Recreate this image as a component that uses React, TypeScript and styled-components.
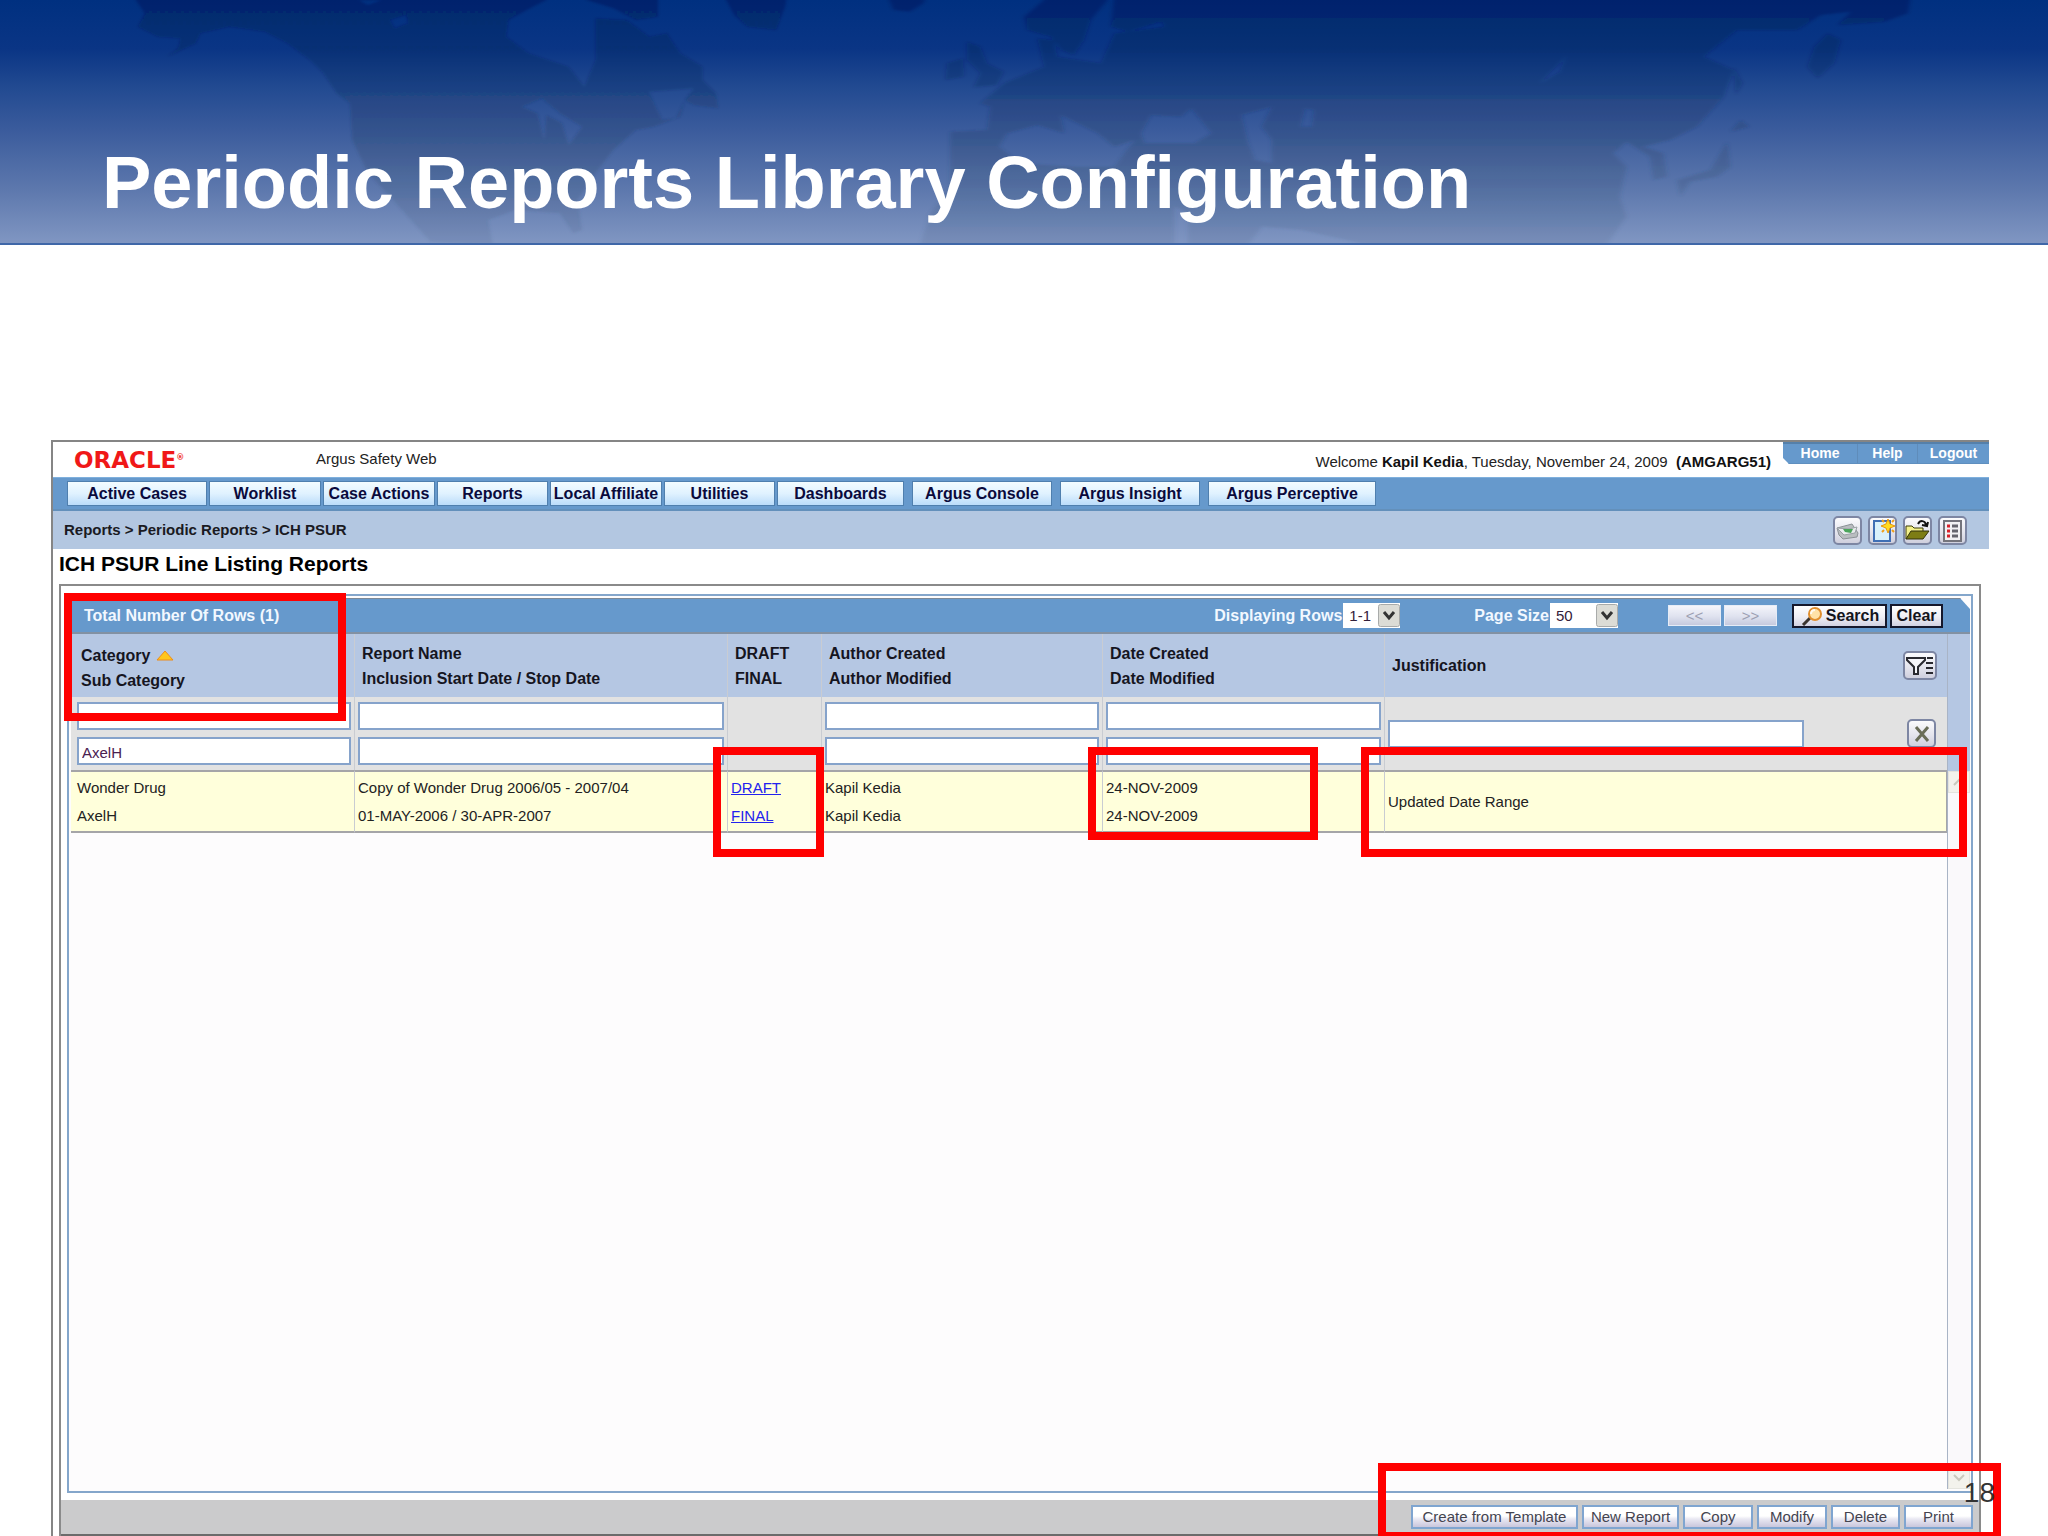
import React from "react";
import styled, { createGlobalStyle, css } from "styled-components";

const GlobalStyle = createGlobalStyle`
  *, *::before, *::after { box-sizing: border-box; }
  body {
    margin: 0;
    background: #ffffff;
    color: #222222;
    font-family: "Liberation Sans", Arial, sans-serif;
    font-size: 15px;
    line-height: 20px;
  }
  button, input, select { font: inherit; color: inherit; }
`;

const Slide = styled.div`
  position: relative;
  display: flex;
  flex-direction: column;
  min-height: 100vh;
  overflow: hidden;
`;

const SlideHeader = styled.header`
  display: grid;
  background: linear-gradient(#003080 0%, #0a3585 20%, #224a91 36%, #3a5b9c 53%, #5d78ad 78%, #8096c2 100%);
  border-bottom: 2px solid #3f67a8;
  height: 245px;
  & > * { grid-area: 1 / 1; }
`;

const SlideTitle = styled.h1`
  margin: 0;
  padding: 141px 40px 0 102px;
  font-size: 74px;
  line-height: 84px;
  color: #ffffff;
`;

const MapArt = styled.svg`
  display: block;
  width: 100%;
  height: 243px;
`;

const AppWindow = styled.main`
  flex: 1;
  display: flex;
  flex-direction: column;
  margin: 195px 59px 0 51px;
  border: solid #858585;
  border-width: 2px 0 0 2px;
`;

const TopBar = styled.div`
  display: flex;
  height: 35px;
  padding-left: 21px;
`;

const Logo = styled.div`
  width: 242px;
  color: #f01818;
  font: bold 23px/36px "DejaVu Sans", sans-serif;
  sup { font-size: 8px; line-height: 8px; vertical-align: 8px; }
`;

const Product = styled.div`
  flex: 1;
  line-height: 34px;
`;

const Welcome = styled.div`
  margin-right: 12px;
  line-height: 40px;
  white-space: pre;
  b { color: #111111; }
`;

const SessionLinks = styled.nav`
  display: flex;
  height: 22px;
  background: #6699cc;
  border-top: 2px solid #5580aa;
  border-bottom: 1px solid #5f8fbf;
  clip-path: polygon(0 0, 100% 0, 100% 100%, 6px 100%, 0 16px);
`;

const SessionLink = styled.a<{ $width: number }>`
  width: ${(p) => p.$width}px;
  color: #ffffff;
  font-size: 14px;
  font-weight: bold;
  line-height: 19px;
  text-align: center;
  text-decoration: none;
  & + & { border-left: 1px solid #5f8cba; }
`;

const MenuBar = styled.nav`
  display: flex;
  gap: 2px;
  height: 34px;
  padding: 3px 0 3px 14px;
  background: #6699cc;
  border-top: 1px solid #7fb0dd;
  border-bottom: 2px solid #6390bb;
`;

const MenuButton = styled.button<{ $width: number; $apart?: boolean }>`
  width: ${(p) => p.$width}px;
  padding: 0;
  border: 1px solid #4f7fae;
  background: linear-gradient(#f3fcff, #e0f2ff 50%, #bbdcfa);
  color: #0a0a3c;
  font-size: 16px;
  font-weight: bold;
  line-height: 20px;
  white-space: nowrap;
  ${(p) => p.$apart && css`margin-left: 6px;`}
`;

const CrumbBar = styled.div`
  display: flex;
  align-items: center;
  justify-content: space-between;
  height: 38px;
  padding: 0 22px 0 11px;
  background: #b3c7e1;
  color: #1a1a22;
  font-weight: bold;
`;

const ToolRow = styled.div`
  display: flex;
  gap: 6px;
`;

const IconButton = styled.button<{ $width?: number }>`
  display: grid;
  place-items: center;
  width: ${(p) => p.$width ?? 29}px;
  height: 29px;
  padding: 0;
  border: 2px solid #7d86a3;
  border-radius: 5px;
  background: linear-gradient(#fbfbfd, #e3e3ec 60%, #cfcfdd);
  svg { display: block; }
`;

const PageTitle = styled.h2`
  margin: 0;
  padding: 1px 6px 6px;
  font-size: 21px;
  line-height: 28px;
  color: #000000;
`;

const Panel = styled.section`
  flex: 1;
  display: flex;
  flex-direction: column;
  margin: 0 8px 0 6px;
  border: solid #8a8a8a;
  border-width: 2px 2px 0;
`;

const GridBox = styled.div`
  flex: 1;
  display: flex;
  flex-direction: column;
  margin: 8px 6px 7px;
  padding: 2px 1px 2px 2px;
  border: 2px solid #84a6cb;
  background: #fdfcfd;
`;

const GridBar = styled.div`
  display: flex;
  align-items: center;
  height: 36px;
  padding: 0 27px 0 13px;
  background: #6699cc;
  border-top: 1px solid #7c8896;
  border-bottom: 2px solid #8291a3;
  color: #f2f8ff;
  font-size: 16px;
  font-weight: bold;
  clip-path: polygon(0 0, calc(100% - 10px) 0, 100% 11px, 100% 100%, 0 100%);
`;

const RowCount = styled.div`
  flex: 1;
`;

const SelectField = styled.label<{ $gap: number }>`
  display: flex;
  align-items: center;
  gap: 1px;
  margin-right: ${(p) => p.$gap}px;
`;

const SelectBox = styled.span<{ $width: number }>`
  position: relative;
  display: block;
  width: ${(p) => p.$width}px;
  height: 25px;
  select {
    appearance: none;
    width: 100%;
    height: 100%;
    padding: 0 24px 0 6px;
    border: 0;
    border-radius: 0;
    background: #ffffff;
    color: #33203a;
    font-weight: normal;
    font-size: 15px;
  }
  svg {
    position: absolute;
    top: 1px;
    right: 0;
    pointer-events: none;
  }
`;

const PageButton = styled.button`
  width: 53px;
  height: 21px;
  margin-right: 3px;
  padding: 0;
  border: 1px solid #e6ecf6;
  background: linear-gradient(#f4f5fb, #dfe2ef 55%, #c6cade);
  color: #9c9fb2;
  font-size: 15px;
  font-weight: normal;
  line-height: 18px;
`;

const ActionButton = styled.button<{ $width: number; $before?: number }>`
  display: flex;
  align-items: center;
  justify-content: center;
  width: ${(p) => p.$width}px;
  height: 24px;
  margin-left: ${(p) => p.$before ?? 3}px;
  padding: 0;
  border: 2px solid #15182c;
  background: linear-gradient(#ffffff, #eeeef5 55%, #d2d2e2);
  color: #14141c;
  font-size: 16px;
  font-weight: bold;
  line-height: 20px;
`;

const GridBody = styled.div`
  flex: 1;
  display: flex;
  align-items: stretch;
`;

const TableArea = styled.div`
  flex: 1;
`;

const Table = styled.table`
  width: 100%;
  table-layout: fixed;
  border-collapse: separate;
  border-spacing: 0;
  text-align: left;
`;

const cellEdge = css`
  border-left: 1px solid #c9ccd2;
  &:first-child { padding-left: 6px; border-left: 0; }
`;

const HeadCell = styled.th`
  height: 63px;
  padding: 0 2px 0 7px;
  background: #b5c7e3;
  color: #15151f;
  font-size: 16px;
  font-weight: bold;
  line-height: 25px;
  ${cellEdge}
  &:first-child { padding: 5px 0 0 10px; }
`;

const FilterCell = styled.td`
  height: 73px;
  padding: 0 3px;
  background: #e2e2e2;
  ${cellEdge}
`;

const DataCell = styled.td`
  height: 63px;
  padding: 0 3px;
  border-top: 2px solid #a5a5a8;
  border-bottom: 2px solid #a5a5a8;
  background: #ffffdb;
  line-height: 28px;
  ${cellEdge}
  &:last-child { border-right: 1px solid #a5a5a8; }
  a { color: #2222ee; }
`;

const Line = styled.div`
  display: flex;
  align-items: center;
  gap: 6px;
`;

const Spread = styled.div`
  display: flex;
  align-items: center;
  justify-content: space-between;
  padding-right: 8px;
`;

const Stack = styled.div`
  display: grid;
  gap: 7px;
`;

const FilterInput = styled.input`
  display: block;
  width: 100%;
  height: 28px;
  padding: 2px 3px 0;
  border: 2px solid #86a3cb;
  background: #ffffff;
  color: #4a2050;
`;

const WideInput = styled(FilterInput)`
  width: 76%;
`;

const Rail = styled.div`
  display: flex;
  flex-direction: column;
  width: 23px;
  border-left: 1px solid #a9b4c6;
`;

const RailHead = styled.div`
  height: 137px;
  background: #b5c7e3;
`;

const ScrollTrack = styled.div`
  flex: 1;
  display: flex;
  flex-direction: column;
  justify-content: space-between;
  background: #faf9fb;
`;

const ScrollButton = styled.button`
  display: grid;
  place-items: center;
  height: 22px;
  padding: 0;
  border: 1px solid #e4e4de;
  background: #f3f2ec;
`;

const Footer = styled.footer`
  display: flex;
  justify-content: flex-end;
  gap: 4px;
  height: 36px;
  padding: 5px 6px 0 0;
  background: #cbcbcc;
  border-bottom: 2px solid #6b6b6b;
`;

const FooterButton = styled.button<{ $width: number }>`
  width: ${(p) => p.$width}px;
  height: 24px;
  padding: 0;
  border: 2px solid #7fa5d0;
  background: linear-gradient(#ffffff 0 45%, #e9e8f2 60%, #c9c6dc);
  color: #444450;
  line-height: 20px;
`;

const PageNumber = styled.div`
  position: absolute;
  right: 53px;
  bottom: 26px;
  color: #333333;
  font-size: 28px;
  line-height: 34px;
`;

type Box = { top: number; height: number; left: number; width?: number; right?: number };

const Callout = styled.div<{ $box: Box }>`
  position: absolute;
  top: ${(p) => p.$box.top}px;
  left: ${(p) => p.$box.left}px;
  height: ${(p) => p.$box.height}px;
  ${(p) => (p.$box.width ? `width: ${p.$box.width}px;` : `right: ${p.$box.right}px;`)}
  border: 8px solid #ff0000;
  pointer-events: none;
`;

const callouts: Box[] = [
  { top: 593, left: 64, width: 282, height: 128 },
  { top: 747, left: 713, width: 111, height: 110 },
  { top: 747, left: 1088, width: 230, height: 93 },
  { top: 747, left: 1361, right: 81, height: 110 },
  { top: 1463, left: 1378, right: 47, height: 77 },
];

const menus = [
  { label: "Active Cases", width: 140 },
  { label: "Worklist", width: 112 },
  { label: "Case Actions", width: 112 },
  { label: "Reports", width: 111 },
  { label: "Local Affiliate", width: 112 },
  { label: "Utilities", width: 111 },
  { label: "Dashboards", width: 127 },
  { label: "Argus Console", width: 140, apart: true },
  { label: "Argus Insight", width: 140, apart: true },
  { label: "Argus Perceptive", width: 168, apart: true },
];

const footerButtons = [
  { label: "Create from Template", width: 167 },
  { label: "New Report", width: 97 },
  { label: "Copy", width: 70 },
  { label: "Modify", width: 70 },
  { label: "Delete", width: 69 },
  { label: "Print", width: 69 },
];

const WorldMap = () => (
  <MapArt viewBox="0 0 2048 243" preserveAspectRatio="none" aria-hidden="true">
    <defs>
      <linearGradient id="land" gradientUnits="userSpaceOnUse" x1="0" y1="0" x2="0" y2="735">
        <stop offset="0" stopColor="#001040" stopOpacity="0.3" />
        <stop offset="0.3" stopColor="#0c2050" stopOpacity="0.24" />
        <stop offset="0.6" stopColor="#2a4468" stopOpacity="0.28" />
        <stop offset="1" stopColor="#4a6288" stopOpacity="0.16" />
      </linearGradient>
      <filter id="soft"><feGaussianBlur stdDeviation="3" /></filter>
    </defs>
    <g transform="translate(100 0) scale(0.4464 0.3333)" fill="url(#land)" filter="url(#soft)" fillRule="evenodd">
      <path d="M80 -20 L80 0 L100 40 L85 80 L130 110 L180 115 L175 145 L150 170 L215 130 L225 100 L290 80 L370 95 L420 130 L470 180 L500 220 L530 280 L560 310 L565 420 L600 520 L650 590 L690 650 L740 725 L880 735 L870 660 L930 630 L1030 640 L1060 700 L1080 690 L1070 600 L1110 520 L1150 450 L1200 390 L1240 380 L1300 350 L1310 300 L1330 315 L1385 325 L1380 280 L1350 240 L1350 200 L1300 160 L1270 100 L1230 110 L1180 60 L1110 55 L1110 180 L1085 260 L1050 200 L960 160 L910 110 L915 60 L970 20 L1000 0 L1000 -20 Z M580 0 L630 0 L600 15 Z M650 60 L685 45 L690 70 L660 85 Z M945 320 L990 295 L1030 340 L1080 380 L1050 435 L1035 370 L1000 345 L995 420 L980 340 Z M1230 275 L1330 265 L1310 300 L1290 355 L1260 360 L1245 320 Z" />
      <path d="M1090 -20 L1250 -20 L1250 50 L1200 60 L1150 25 L1090 0 Z" />
      <path d="M1395 -20 L1540 -20 L1535 20 L1515 90 L1450 80 L1420 45 Z" />
    </g>
    <g transform="translate(900 0) scale(0.6697 0.3333)" fill="url(#land)" filter="url(#soft)" fillRule="evenodd">
      <path d="M-20 -20 L40 -20 L35 10 L15 35 L-10 30 Z" />
      <path d="M215 -20 L310 -20 L310 0 L285 60 L275 120 L260 165 L240 150 L225 110 L190 90 L185 50 L215 0 Z" />
      <path d="M100 125 L120 140 L130 190 L155 215 L145 255 L110 262 L120 220 L100 180 Z M70 190 L95 175 L95 230 L68 240 Z" />
      <path d="M320 -20 L1510 -20 L1505 40 L1470 65 L1400 75 L1420 35 L1375 45 L1340 90 L1250 90 L1200 170 L1245 210 L1230 290 L1190 380 L1150 420 L1110 440 L1140 460 L1145 530 L1125 540 L1120 470 L1085 425 L1065 460 L1085 500 L1075 590 L1085 650 L1055 735 L700 735 L600 690 L540 680 L520 735 L30 735 L45 640 L75 560 L75 395 L130 390 L135 320 L120 310 L155 250 L215 200 L205 115 L230 120 L235 170 L300 190 L320 100 L395 80 L390 65 L340 95 L315 80 Z M205 375 L160 400 L148 440 L180 490 L260 500 L320 500 L350 420 L320 440 L295 400 L240 345 L245 400 Z M375 345 L360 400 L365 430 L440 430 L465 400 L435 325 L420 350 Z M555 320 L510 345 L520 430 L530 480 L555 490 L555 420 L540 380 Z M605 325 L618 330 L615 380 L598 380 Z M995 165 L985 215 L955 250 L985 190 Z M410 620 L430 640 L430 735 L410 735 Z" />
      <path d="M1385 100 L1405 120 L1395 190 L1370 235 L1355 200 L1365 140 Z M1245 200 L1258 250 L1248 285 Z M1255 360 L1268 380 L1240 395 Z M1235 425 L1240 500 L1220 530 L1180 545 L1165 590 L1160 540 L1210 510 Z" />
    </g>
  </MapArt>
);

const Chevron = () => (
  <svg width="22" height="23" viewBox="0 0 22 23">
    <rect x="0.5" y="0.5" width="21" height="22" rx="2" fill="#dcdcd6" stroke="#a9abaa" />
    <path d="M6 8 L11 14 L16 8" fill="none" stroke="#333" strokeWidth="3" />
  </svg>
);

const PrinterIcon = () => (
  <svg width="23" height="20" viewBox="0 0 23 20">
    <path d="M1 8 L16 4 L22 13 L21 17 L7 19 L3 15 Z" fill="#b9bdc0" stroke="#8b9196" />
    <path d="M1 8 L13 9 L21 7 L19 13 L8 15 Z" fill="#e9ecee" stroke="#9aa0a5" />
    <path d="M7 9 L17 9 L15 13 L9 12 Z" fill="#4ba55b" />
  </svg>
);

const NewPageIcon = () => (
  <svg width="25" height="25" viewBox="0 0 25 25">
    <path d="M4 3 H20 V23 H4 Z" fill="#d9f1fb" stroke="#3f6fb5" strokeWidth="2" />
    <path d="M18 1 L20 6 L25 8 L20 10 L18 15 L16 10 L11 8 L16 6 Z" fill="#ffdc1e" stroke="#e8960c" />
    <path d="M12 2 L14 4 M24 2 L22 4 M12 14 L14 12 M24 14 L22 12" stroke="#f0a018" strokeWidth="2" />
  </svg>
);

const FolderIcon = () => (
  <svg width="25" height="22" viewBox="0 0 25 22">
    <path d="M1 20 V7 H7 L9 9 H18 V13" fill="#f3f08a" stroke="#3c3c08" strokeWidth="1" />
    <path d="M1 20 L6 12 H24 L18 20 Z" fill="#7d7d14" stroke="#33330a" />
    <path d="M13 5 C15 1 20 1 21 6 M23 3 L22 7 L17 6" fill="none" stroke="#111" strokeWidth="2" />
  </svg>
);

const ListIcon = () => (
  <svg width="21" height="23" viewBox="0 0 21 23">
    <rect x="2" y="2" width="17" height="20" fill="#f2f2f4" stroke="#74747c" strokeWidth="2" />
    <path d="M5 7 H8 M5 12 H8 M5 17 H8" stroke="#d8202a" strokeWidth="3" />
    <path d="M10 7 H16 M10 12 H16 M10 17 H16" stroke="#66666e" strokeWidth="3" />
  </svg>
);

const FilterIcon = () => (
  <svg width="28" height="20" viewBox="0 0 28 20">
    <path d="M1 2 H19 V4 L12 11 V18 H8 V11 L1 4 Z" fill="#f6f6fa" stroke="#2a2a30" strokeWidth="2" />
    <path d="M21 2 H27 M20 7 H27 M20 12 H27 M20 17 H27" stroke="#2a2a30" strokeWidth="2" />
  </svg>
);

const CrossIcon = () => (
  <svg width="16" height="16" viewBox="0 0 16 16">
    <path d="M2 1 L14 15 M14 1 L2 15" stroke="#6a6d58" strokeWidth="3" />
  </svg>
);

const LensIcon = () => (
  <svg width="26" height="20" viewBox="0 0 26 20">
    <path d="M3 19 L10 12" stroke="#3a3430" strokeWidth="3" />
    <circle cx="15" cy="8" r="6" fill="#ffe2a8" stroke="#e08e2e" strokeWidth="2" />
    <path d="M11 8 C11 5 13 4 15 4" fill="none" stroke="#fffaf0" strokeWidth="2" />
  </svg>
);

const SortIcon = () => (
  <svg width="18" height="11" viewBox="0 0 18 11">
    <path d="M9 1 L17 10 H1 Z" fill="#ffc61a" stroke="#ee8c1a" />
  </svg>
);

const ScrollArrow = ({ down }: { down?: boolean }) => (
  <svg width="12" height="8" viewBox="0 0 12 8">
    <path d={down ? "M1 1 L6 6 L11 1" : "M1 7 L6 2 L11 7"} fill="none" stroke="#c9c8bd" strokeWidth="2" />
  </svg>
);

const FilterPair = ({ first, second, value }: { first: string; second: string; value?: string }) => (
  <Stack>
    <FilterInput aria-label={first} />
    <FilterInput aria-label={second} defaultValue={value} />
  </Stack>
);

export default function App() {
  return (
    <Slide>
      <GlobalStyle />
      <SlideHeader>
        <WorldMap />
        <SlideTitle>Periodic Reports Library Configuration</SlideTitle>
      </SlideHeader>

      <AppWindow>
        <TopBar>
          <Logo>ORACLE<sup>®</sup></Logo>
          <Product>Argus Safety Web</Product>
          <Welcome>
            Welcome <b>Kapil Kedia</b>, Tuesday, November 24, 2009{"  "}<b>(AMGARG51)</b>
          </Welcome>
          <SessionLinks>
            <SessionLink href="#home" $width={74}>Home</SessionLink>
            <SessionLink href="#help" $width={60}>Help</SessionLink>
            <SessionLink href="#logout" $width={72}>Logout</SessionLink>
          </SessionLinks>
        </TopBar>

        <MenuBar>
          {menus.map((m) => (
            <MenuButton key={m.label} $width={m.width} $apart={m.apart}>{m.label}</MenuButton>
          ))}
        </MenuBar>

        <CrumbBar>
          <span>Reports &gt; Periodic Reports &gt; ICH PSUR</span>
          <ToolRow>
            <IconButton aria-label="Print"><PrinterIcon /></IconButton>
            <IconButton aria-label="New"><NewPageIcon /></IconButton>
            <IconButton aria-label="Open"><FolderIcon /></IconButton>
            <IconButton aria-label="List"><ListIcon /></IconButton>
          </ToolRow>
        </CrumbBar>

        <PageTitle>ICH PSUR Line Listing Reports</PageTitle>

        <Panel>
          <GridBox>
            <GridBar>
              <RowCount>Total Number Of Rows (1)</RowCount>
              <SelectField $gap={74}>
                Displaying Rows
                <SelectBox $width={57}>
                  <select defaultValue="1-1"><option>1-1</option></select>
                  <Chevron />
                </SelectBox>
              </SelectField>
              <SelectField $gap={50}>
                Page Size
                <SelectBox $width={68}>
                  <select defaultValue="50"><option>50</option></select>
                  <Chevron />
                </SelectBox>
              </SelectField>
              <PageButton>&lt;&lt;</PageButton>
              <PageButton>&gt;&gt;</PageButton>
              <ActionButton $width={95} $before={12}><LensIcon />Search</ActionButton>
              <ActionButton $width={53}>Clear</ActionButton>
            </GridBar>

            <GridBody>
              <TableArea>
                <Table>
                  <colgroup>
                    <col style={{ width: 283 }} />
                    <col style={{ width: 373 }} />
                    <col style={{ width: 94 }} />
                    <col style={{ width: 281 }} />
                    <col style={{ width: 282 }} />
                    <col />
                  </colgroup>
                  <thead>
                    <tr>
                      <HeadCell><Line>Category <SortIcon /></Line>Sub Category</HeadCell>
                      <HeadCell>Report Name<br />Inclusion Start Date / Stop Date</HeadCell>
                      <HeadCell>DRAFT<br />FINAL</HeadCell>
                      <HeadCell>Author Created<br />Author Modified</HeadCell>
                      <HeadCell>Date Created<br />Date Modified</HeadCell>
                      <HeadCell>
                        <Spread>
                          Justification
                          <IconButton aria-label="Filter" $width={34}><FilterIcon /></IconButton>
                        </Spread>
                      </HeadCell>
                    </tr>
                  </thead>
                  <tbody>
                    <tr>
                      <FilterCell><FilterPair first="Category" second="Sub Category" value="AxelH" /></FilterCell>
                      <FilterCell><FilterPair first="Report Name" second="Inclusion Dates" /></FilterCell>
                      <FilterCell />
                      <FilterCell><FilterPair first="Author Created" second="Author Modified" /></FilterCell>
                      <FilterCell><FilterPair first="Date Created" second="Date Modified" /></FilterCell>
                      <FilterCell>
                        <Spread>
                          <WideInput aria-label="Justification" />
                          <IconButton aria-label="Clear filter"><CrossIcon /></IconButton>
                        </Spread>
                      </FilterCell>
                    </tr>
                    <tr>
                      <DataCell>Wonder Drug<br />AxelH</DataCell>
                      <DataCell>Copy of Wonder Drug 2006/05 - 2007/04<br />01-MAY-2006 / 30-APR-2007</DataCell>
                      <DataCell><a href="#draft">DRAFT</a><br /><a href="#final">FINAL</a></DataCell>
                      <DataCell>Kapil Kedia<br />Kapil Kedia</DataCell>
                      <DataCell>24-NOV-2009<br />24-NOV-2009</DataCell>
                      <DataCell>Updated Date Range</DataCell>
                    </tr>
                  </tbody>
                </Table>
              </TableArea>
              <Rail>
                <RailHead />
                <ScrollTrack>
                  <ScrollButton aria-label="Scroll up"><ScrollArrow /></ScrollButton>
                  <ScrollButton aria-label="Scroll down"><ScrollArrow down /></ScrollButton>
                </ScrollTrack>
              </Rail>
            </GridBody>
          </GridBox>

          <Footer>
            {footerButtons.map((b) => (
              <FooterButton key={b.label} $width={b.width}>{b.label}</FooterButton>
            ))}
          </Footer>
        </Panel>
      </AppWindow>

      {callouts.map((box, i) => (
        <Callout key={i} $box={box} />
      ))}
      <PageNumber>18</PageNumber>
    </Slide>
  );
}
